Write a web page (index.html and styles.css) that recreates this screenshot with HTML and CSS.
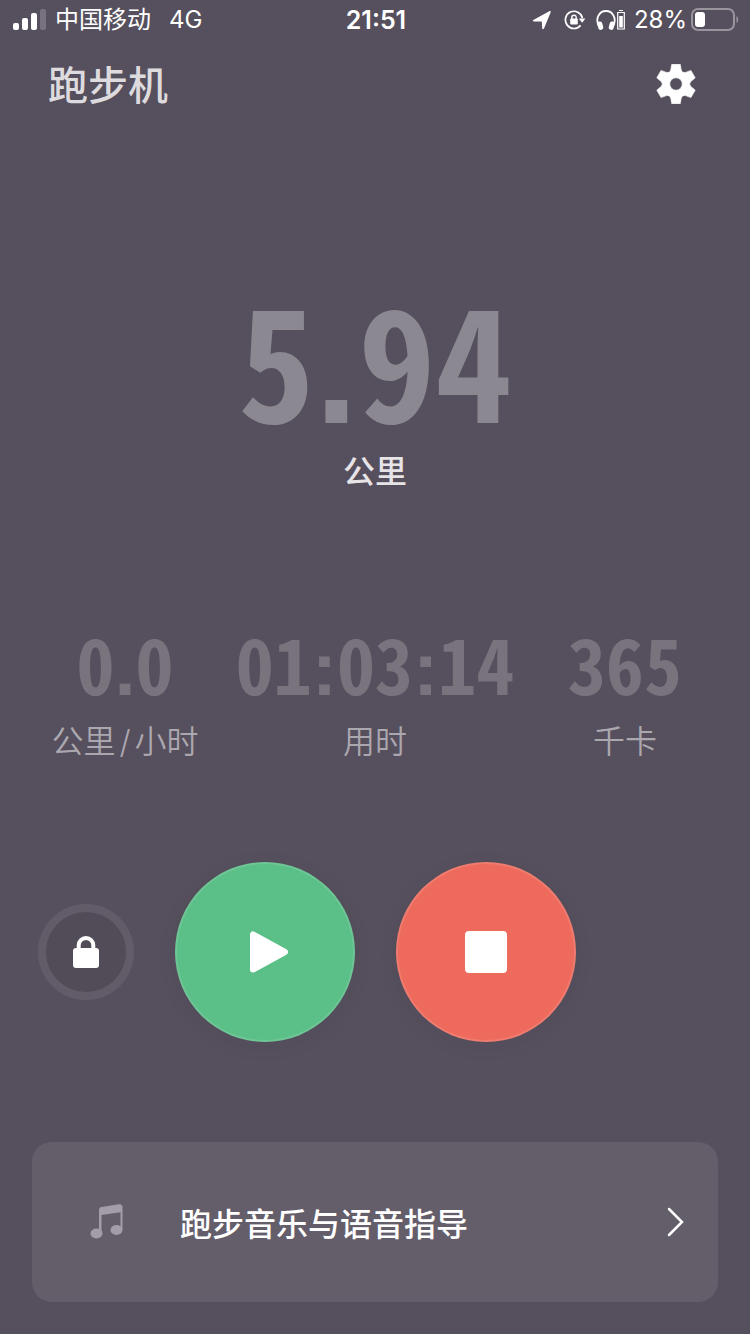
FILE: index.html
```html
<!DOCTYPE html>
<html lang="zh-CN">
<head>
  <meta charset="UTF-8">
  <title>跑步机</title>
  <meta name="viewport" content="width=device-width, initial-scale=1">
  <link rel="stylesheet" href="styles.css">
</head>
<body>
  <div class="status-bar">
    <div class="status-left">
      <svg class="signal" width="34" height="22" viewBox="0 0 34 22" fill="#fff">
        <rect x="0" y="14" width="6" height="7" rx="2"/>
        <rect x="9" y="9" width="6" height="12" rx="2"/>
        <rect x="18" y="4" width="6" height="17" rx="2"/>
        <rect x="27" y="0" width="6" height="21" rx="2" opacity="0.2"/>
      </svg>
      <span class="carrier">中国移动</span>
      <span>4G</span>
    </div>
    <div class="clock">21:51</div>
    <div class="status-right">
      <svg width="20" height="20" viewBox="0 0 20 20" fill="#fff">
        <path d="M1.300 10 17.300 1.200c1-.5 1.800.2 1.300 1.200L12 18.400c-.5 1.100-1.700.9-1.800-.2L9.800 11.600 2 11.500c-1.200 0-1.500-1-.7-1.500z"/>
      </svg>
      <svg class="rotation" width="22" height="20" viewBox="0 0 22 20" fill="none" stroke="#fff" stroke-width="1.7">
        <path d="M16.600 15.400A8.600 8.600 0 1 1 18.400 8"/>
        <path d="M14.800 8.600h6.600l-3.200 4.200z" fill="#fff" stroke="none"/>
        <rect x="6.200" y="8.600" width="7.600" height="5.800" rx="1" fill="#fff" stroke="none"/>
        <path d="M7.800 9V7.400a2.200 2.200 0 0 1 4.400 0V9" stroke-width="1.4"/>
      </svg>
      <svg class="headphones" width="30" height="22" viewBox="0 0 30 22" fill="none" stroke="#fff">
        <path d="M3.200 17.500C-1.400 9.800 3.200 2 10 2s11.400 7.800 6.800 15.500" stroke-width="1.8"/>
        <rect x="1.800" y="12.500" width="5" height="8.500" rx="2.500" fill="#fff" stroke="none" transform="rotate(-14 4.300 16.700)"/>
        <rect x="13.200" y="12.500" width="5" height="8.500" rx="2.500" fill="#fff" stroke="none" transform="rotate(14 15.700 16.700)"/>
        <path d="M23 1.500h4M21.700 3.500h6.600v16.500h-6.600z" stroke-width="1.200"/>
        <path d="M23.200 7h3.600v11.500h-3.600z" fill="#fff" stroke="none"/>
      </svg>
      <span>28%</span>
      <svg class="battery" width="48" height="24" viewBox="0 0 48 24">
        <rect x="1" y="1" width="42" height="21" rx="6" fill="none" stroke="#fff" stroke-width="2" opacity="0.4"/>
        <path d="M45.500 8c2.300 1 2.300 6 0 7z" fill="#fff" opacity="0.4"/>
        <rect x="4" y="4" width="10" height="15" rx="3" fill="#fff"/>
      </svg>
    </div>
  </div>

  <header class="header">
    <h1>跑步机</h1>
    <button class="settings" aria-label="设置">
      <svg width="40" height="40" viewBox="-61 -61 122 122">
        <path fill="#fff" fill-rule="evenodd" stroke="#fff" stroke-width="2" stroke-linejoin="round" d="M-16-43-13-60H13L16-43Q19-33 29.200-35.400L45.500-41.300 58.500-18.700 45.200-7.600Q38 0 45.200 7.600L58.500 18.700 45.500 41.300 29.200 35.400Q19 33 16 43L13 60H-13L-16 43Q-19 33-29.200 35.400L-45.500 41.300-58.500 18.700-45.200 7.600Q-38 0-45.200-7.600L-58.500-18.700-45.500-41.300-29.200-35.400Q-19-33-16-43zM0-19a19 19 0 1 0 0 38a19 19 0 1 0 0-38z"/>
      </svg>
    </button>
  </header>

  <main>
    <section class="distance">
      <div class="distance-value">5<span class="sep">.</span>94</div>
      <div class="distance-unit">公里</div>
    </section>

    <section class="stats">
      <div>
        <div class="stat-value">0<span class="sep">.</span>0</div>
        <div class="stat-label">公里<span class="per">/</span>小时</div>
      </div>
      <div>
        <div class="stat-value">01<span class="sep">:</span>03<span class="sep">:</span>14</div>
        <div class="stat-label">用时</div>
      </div>
      <div>
        <div class="stat-value">365</div>
        <div class="stat-label">千卡</div>
      </div>
    </section>

    <section class="controls">
      <button class="lock" aria-label="锁定">
        <svg width="26" height="32" viewBox="0 0 26 32">
          <rect x="0" y="12" width="26" height="20" rx="3" fill="#fff"/>
          <path d="M5.700 14V9.300a7.300 7.300 0 0 1 14.600 0V14" fill="none" stroke="#fff" stroke-width="4"/>
        </svg>
      </button>
      <button class="round play" aria-label="继续">
        <svg width="48" height="48" viewBox="0 0 48 48" fill="#fff" stroke="#fff" stroke-width="6" stroke-linejoin="round">
          <path d="M12 6.500v35L44 24z"/>
        </svg>
      </button>
      <button class="round stop" aria-label="停止">
        <svg width="42" height="42" viewBox="0 0 42 42">
          <rect width="42" height="42" rx="4" fill="#fff"/>
        </svg>
      </button>
    </section>
  </main>

  <a class="music" href="#">
    <svg width="34" height="36" viewBox="0 0 34 36" fill="#a29da6">
      <ellipse cx="6.500" cy="29.500" rx="6" ry="5"/>
      <ellipse cx="26.500" cy="26" rx="6" ry="5"/>
      <path d="M9 29.500V6c0-2 1-2.800 2.500-3.100L29 .300c2-.3 3.500.7 3.500 2.700v23h-2V8.200L11.500 11v18.500z"/>
    </svg>
    <span class="music-title">跑步音乐与语音指导</span>
    <svg width="18" height="30" viewBox="0 0 18 30" fill="none" stroke="#fff" stroke-width="2.500" stroke-linecap="round">
      <path d="m3 2 13 13L3 28"/>
    </svg>
  </a>
</body>
</html>
```
FILE: styles.css
```css
:root {
  --bg: #564f5d;
  --card: #645e6a;
  --green: #5bbf88;
  --red: #ee6a5c;
  --font: Inter, "Noto Sans CJK SC", sans-serif;
  --digits: "Noto Sans CJK SC", sans-serif;
}

* {
  box-sizing: border-box;
}

body {
  margin: 0;
  min-height: 100vh;
  padding-bottom: 32px;
  display: flex;
  flex-direction: column;
  background: var(--bg);
  color: #fff;
  font-family: var(--font);
}

svg {
  display: block;
  flex: none;
}

button {
  display: flex;
  align-items: center;
  justify-content: center;
  padding: 0;
  border: none;
  background: none;
  cursor: pointer;
}

.status-bar {
  display: grid;
  grid-template-columns: 1fr auto 1fr;
  align-items: center;
  height: 40px;
  padding: 0 11px 0 13px;
  font-size: 24px;
  line-height: 40px;
}

.status-left,
.status-right {
  display: flex;
  align-items: center;
}

.status-right {
  justify-content: flex-end;
}

.carrier {
  margin: 0 18px 0 8px;
}

.clock {
  font-size: 25px;
  font-weight: 600;
}

.rotation {
  margin: 0 10px 0 12px;
}

.headphones {
  margin-right: 8px;
}

.battery {
  margin-left: 4px;
}

.header {
  display: flex;
  justify-content: space-between;
  align-items: center;
  height: 88px;
  padding: 0 54px 0 48px;
}

h1 {
  margin: 0;
  padding-top: 4px;
  font-size: 40px;
  font-weight: 500;
  line-height: 80px;
  color: #dddbde;
}

.distance {
  padding-top: 156px;
  text-align: center;
}

/* half-width figures keep the readouts narrow */
.distance-value,
.stat-value {
  display: flex;
  justify-content: center;
  align-items: baseline;
  font-family: var(--digits);
  font-feature-settings: "hwid";
}

.sep {
  font-family: "Liberation Sans", sans-serif;
  font-feature-settings: normal;
  font-weight: 700;
  line-height: 40px;
}

.distance-value {
  font-size: 154px;
  font-weight: 700;
  line-height: 144px;
  color: #8c8891;
}

.distance-unit {
  margin-top: 24px;
  font-size: 32px;
  font-weight: 500;
  line-height: 40px;
  color: #e6e4e7;
}

.stats {
  display: grid;
  grid-template-columns: repeat(3, minmax(0, 1fr));
  padding-top: 132px;
  text-align: center;
}

.stat-value {
  font-size: 76px;
  font-weight: 700;
  line-height: 76px;
  color: #79737e;
}

.stat-label {
  margin-top: 22px;
  font-size: 32px;
  font-weight: 350;
  line-height: 40px;
  color: #aba7ae;
}

.per {
  margin: 0 4px;
}

.controls {
  display: flex;
  align-items: center;
  gap: 41px;
  padding: 100px 38px;
}

.lock {
  width: 96px;
  height: 96px;
  border: 8px solid #625c69;
  border-radius: 50%;
  background: #524c59;
}

.round {
  width: 180px;
  height: 180px;
  border: 2px solid rgba(255, 255, 255, 0.12);
  border-radius: 50%;
  box-shadow: 0 4px 24px rgba(0, 0, 0, 0.04);
}

.play {
  background: var(--green);
}

.stop {
  background: var(--red);
}

.music {
  display: flex;
  align-items: center;
  height: 160px;
  margin: 0 32px;
  padding: 0 34px 0 58px;
  border-radius: 20px;
  background: var(--card);
  color: #fff;
  text-decoration: none;
}

.music-title {
  flex: 1;
  margin-left: 56px;
  font-size: 32px;
  font-weight: 500;
}
```
